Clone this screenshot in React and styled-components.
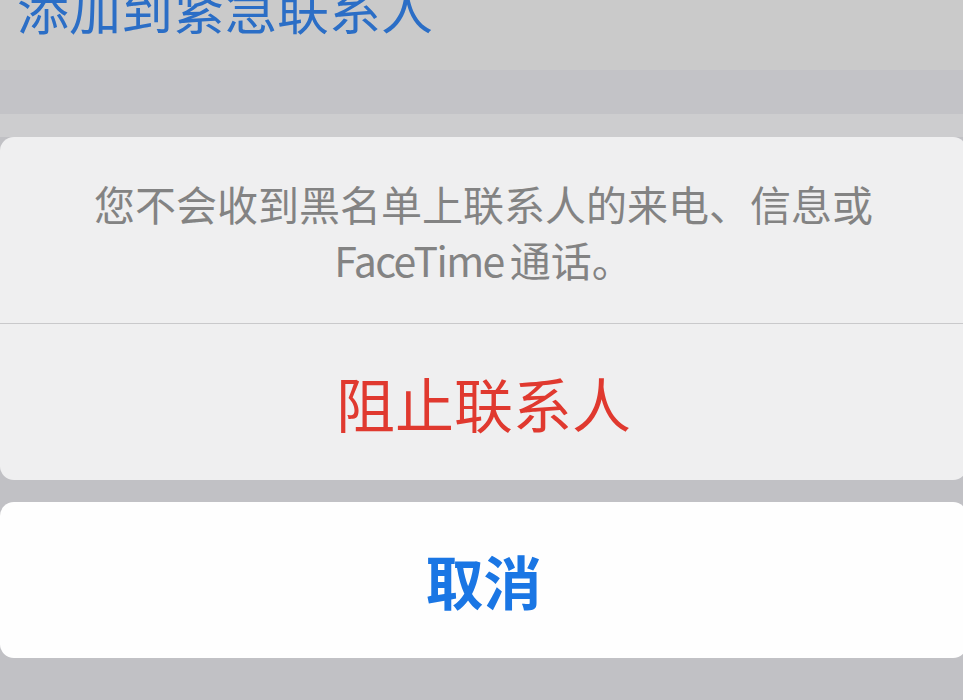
import React from "react";
import styled, { createGlobalStyle } from "styled-components";

const GlobalStyle = createGlobalStyle`
  html, body {
    margin: 0;
    padding: 0;
    background: #c1c1c5;
  }
  body {
    font-family: "Noto Sans CJK SC", "Noto Sans", sans-serif;
    overflow: hidden;
  }
`;

const Screen = styled.div`
  width: 963px;
  height: 700px;
  overflow: hidden;
  display: flex;
  flex-direction: column;
  background: #c1c1c5;
`;

const ListRow = styled.div`
  height: 70px;
  background: #cacaca;
  padding-left: 17px;
  overflow: hidden;
`;

const RowLabel = styled.div`
  font-size: 52px;
  line-height: 52px;
  margin-top: -18px;
  color: #2b6ec6;
  font-weight: 400;
`;

const Band = styled.div`
  height: ${(p) => p.h}px;
  background: ${(p) => p.bg};
`;

const Sheet = styled.div`
  display: flex;
  flex-direction: column;
  gap: 22px;
  margin-right: -4px;
`;

const Card = styled.div`
  background: ${(p) => (p.light ? "#fefefe" : "#efeff0")};
  border-radius: 14px;
  display: flex;
  flex-direction: column;
  overflow: hidden;
`;

const Message = styled.div`
  height: 187px;
  border-bottom: 1px solid #c9c9cb;
  display: flex;
  flex-direction: column;
  align-items: center;
  justify-content: center;
  padding-top: 2px;
  box-sizing: border-box;
  color: #838383;
  font-size: 41px;
  line-height: 56px;
  text-align: center;
`;

const Latin = styled.span`
  letter-spacing: -1.6px;
  margin-right: 6px;
`;

const Action = styled.div`
  height: ${(p) => p.h}px;
  display: flex;
  align-items: center;
  justify-content: center;
  color: ${(p) => p.color};
  font-size: ${(p) => p.size}px;
  font-weight: ${(p) => (p.bold ? 700 : 400)};
`;

export default function App() {
  return (
    <>
      <GlobalStyle />
      <Screen>
        <ListRow>
          <RowLabel>添加到紧急联系人</RowLabel>
        </ListRow>
        <Band h={44} bg="#c3c3c7" />
        <Band h={23} bg="#cdcdcf" />
        <Sheet>
          <Card>
            <Message>
              <div>您不会收到黑名单上联系人的来电、信息或</div>
              <div>
                <Latin>FaceTime</Latin>通话。
              </div>
            </Message>
            <Action h={156} color="#e0392f" size={59}>
              阻止联系人
            </Action>
          </Card>
          <Card light>
            <Action h={156} color="#1a76e4" size={58} bold>
              取消
            </Action>
          </Card>
        </Sheet>
      </Screen>
    </>
  );
}
